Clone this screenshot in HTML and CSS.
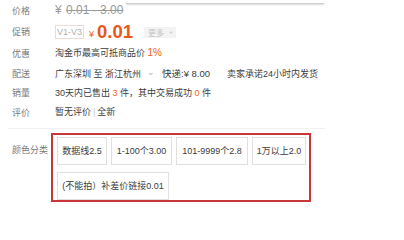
FILE: index.html
```html
<!DOCTYPE html>
<html lang="zh-CN">
<head>
<meta charset="utf-8">
<title>商品信息</title>
<link rel="stylesheet" href="styles.css">
</head>
<body>
<div class="topbar"></div>
<div class="meta">
  <div class="row r1">
    <div class="label">价格</div>
    <div class="value old">¥ <span class="strike">0.01 - 3.00</span></div>
  </div>
  <div class="row r2">
    <div class="label">促销</div>
    <div class="promo">
      <span class="vip">V1-V3</span>
      <span class="yen">¥</span><span class="now">0.01</span>
      <span class="more">更多<span class="caret">▼</span></span>
    </div>
  </div>
  <div class="row r3">
    <div class="label">优惠</div>
    <div class="value">淘金币最高可抵商品价 <span class="hl pct">1%</span></div>
  </div>
  <div class="row r4">
    <div class="label">配送</div>
    <div class="value">广东深圳 至 浙江杭州<span class="down">⌄</span><span class="num">快递:¥ 8.00</span><span class="promise">卖家承诺24小时内发货</span></div>
  </div>
  <div class="row r5">
    <div class="label">销量</div>
    <div class="value">30天内已售出 <span class="hl">3</span> 件，其中交易成功 <span class="hl">0</span> 件</div>
  </div>
  <div class="row r6">
    <div class="label">评价</div>
    <div class="value">暂无评价<span class="sep">|</span>全新</div>
  </div>
</div>
<div class="sku">
  <div class="label">颜色分类</div>
  <div class="sku-box">
    <span class="opt w1">数据线2.5</span>
    <span class="opt w2">1-100个3.00</span>
    <span class="opt w3">101-9999个2.8</span>
    <span class="opt w4">1万以上2.0</span>
    <span class="opt w5">(不能拍）补差价链接0.01</span>
  </div>
</div>
</body>
</html>
```
FILE: styles.css
```css
html, body {
  margin: 0;
  padding: 0;
  background: #fff;
}
body {
  font-family: "Liberation Sans", "Noto Sans CJK SC", sans-serif;
  font-size: 9px;
  color: #3c3c3c;
  width: 404px;
  height: 236px;
  overflow: hidden;
  position: relative;
}
.topbar {
  position: absolute;
  left: 126px;
  top: 0;
  width: 198px;
  height: 3px;
  border-bottom: 1px solid #cfcfcf;
  box-shadow: 0 1px 2px rgba(0,0,0,0.15);
}
.meta {
  margin-left: 8px;
  width: 313px;
  padding: 0 0 6px 4px;
  border-bottom: 1px solid #f0f0f0;
}
.row {
  display: flex;
  align-items: center;
}
.r1 { height: 20px; }
.r2 { height: 23px; }
.r3 { height: 20px; }
.r4 { height: 20px; }
.r5 { height: 19px; }
.r6 { height: 20px; }
.label {
  width: 43px;
  flex: none;
  color: #7a7a7a;
  white-space: nowrap;
}
.value {
  display: block;
  white-space: nowrap;
  line-height: 14px;
}
.old {
  color: #9a9a9a;
  font-size: 12px;
}
.strike {
  margin-left: 1px;
  text-decoration: line-through;
}
.promo {
  display: flex;
  align-items: center;
  white-space: nowrap;
}
.vip {
  box-sizing: border-box;
  width: 29px;
  height: 14px;
  line-height: 12px;
  text-align: center;
  border: 1px solid #ecdcd8;
  color: #b0b0b0;
  font-size: 9px;
}
.yen {
  color: #ee5a1a;
  margin-left: 5px;
  font-size: 9px;
  margin-top: 4px;
}
.now {
  color: #e8581a;
  font-size: 18.5px;
  font-weight: bold;
  margin-left: 3px;
  line-height: 20px;
}
.more {
  margin-left: 11px;
  box-sizing: border-box;
  width: 32px;
  height: 11px;
  line-height: 11px;
  background: #f3f3f3;
  color: #c4c4c4;
  font-size: 8px;
  padding-left: 4px;
  margin-top: 2px;
}
.caret {
  font-size: 4px;
  margin-left: 5px;
  vertical-align: 2px;
}
.hl { color: #f2600f; }
.pct { font-size: 10px; }
.down {
  display: inline-block;
  color: #b5b5b5;
  font-size: 9px;
  margin: 0 7px 0 6px;
  vertical-align: 2px;
}
.num { font-size: 9.5px; }
.promise { margin-left: 17px; }
.sep {
  color: #c8c8c8;
  margin: 0 2px;
}
.sku {
  display: flex;
  padding: 4px 0 0 12px;
}
.sku .label {
  width: 39px;
  padding-top: 10px;
}
.sku-box {
  box-sizing: border-box;
  width: 260px;
  height: 69px;
  border: 2px solid #c8363a;
  padding: 2px 0 0 4px;
  display: flex;
  flex-wrap: wrap;
  align-content: flex-start;
  column-gap: 4px;
  row-gap: 7px;
}
.opt {
  box-sizing: border-box;
  height: 28px;
  line-height: 26px;
  border: 1px solid #e0e0e0;
  color: #3c3c3c;
  text-align: center;
  white-space: nowrap;
}
.w1 { width: 50px; }
.w2 { width: 61px; }
.w3 { width: 72px; }
.w4 { width: 54px; }
.w5 { width: 112px; }
```
